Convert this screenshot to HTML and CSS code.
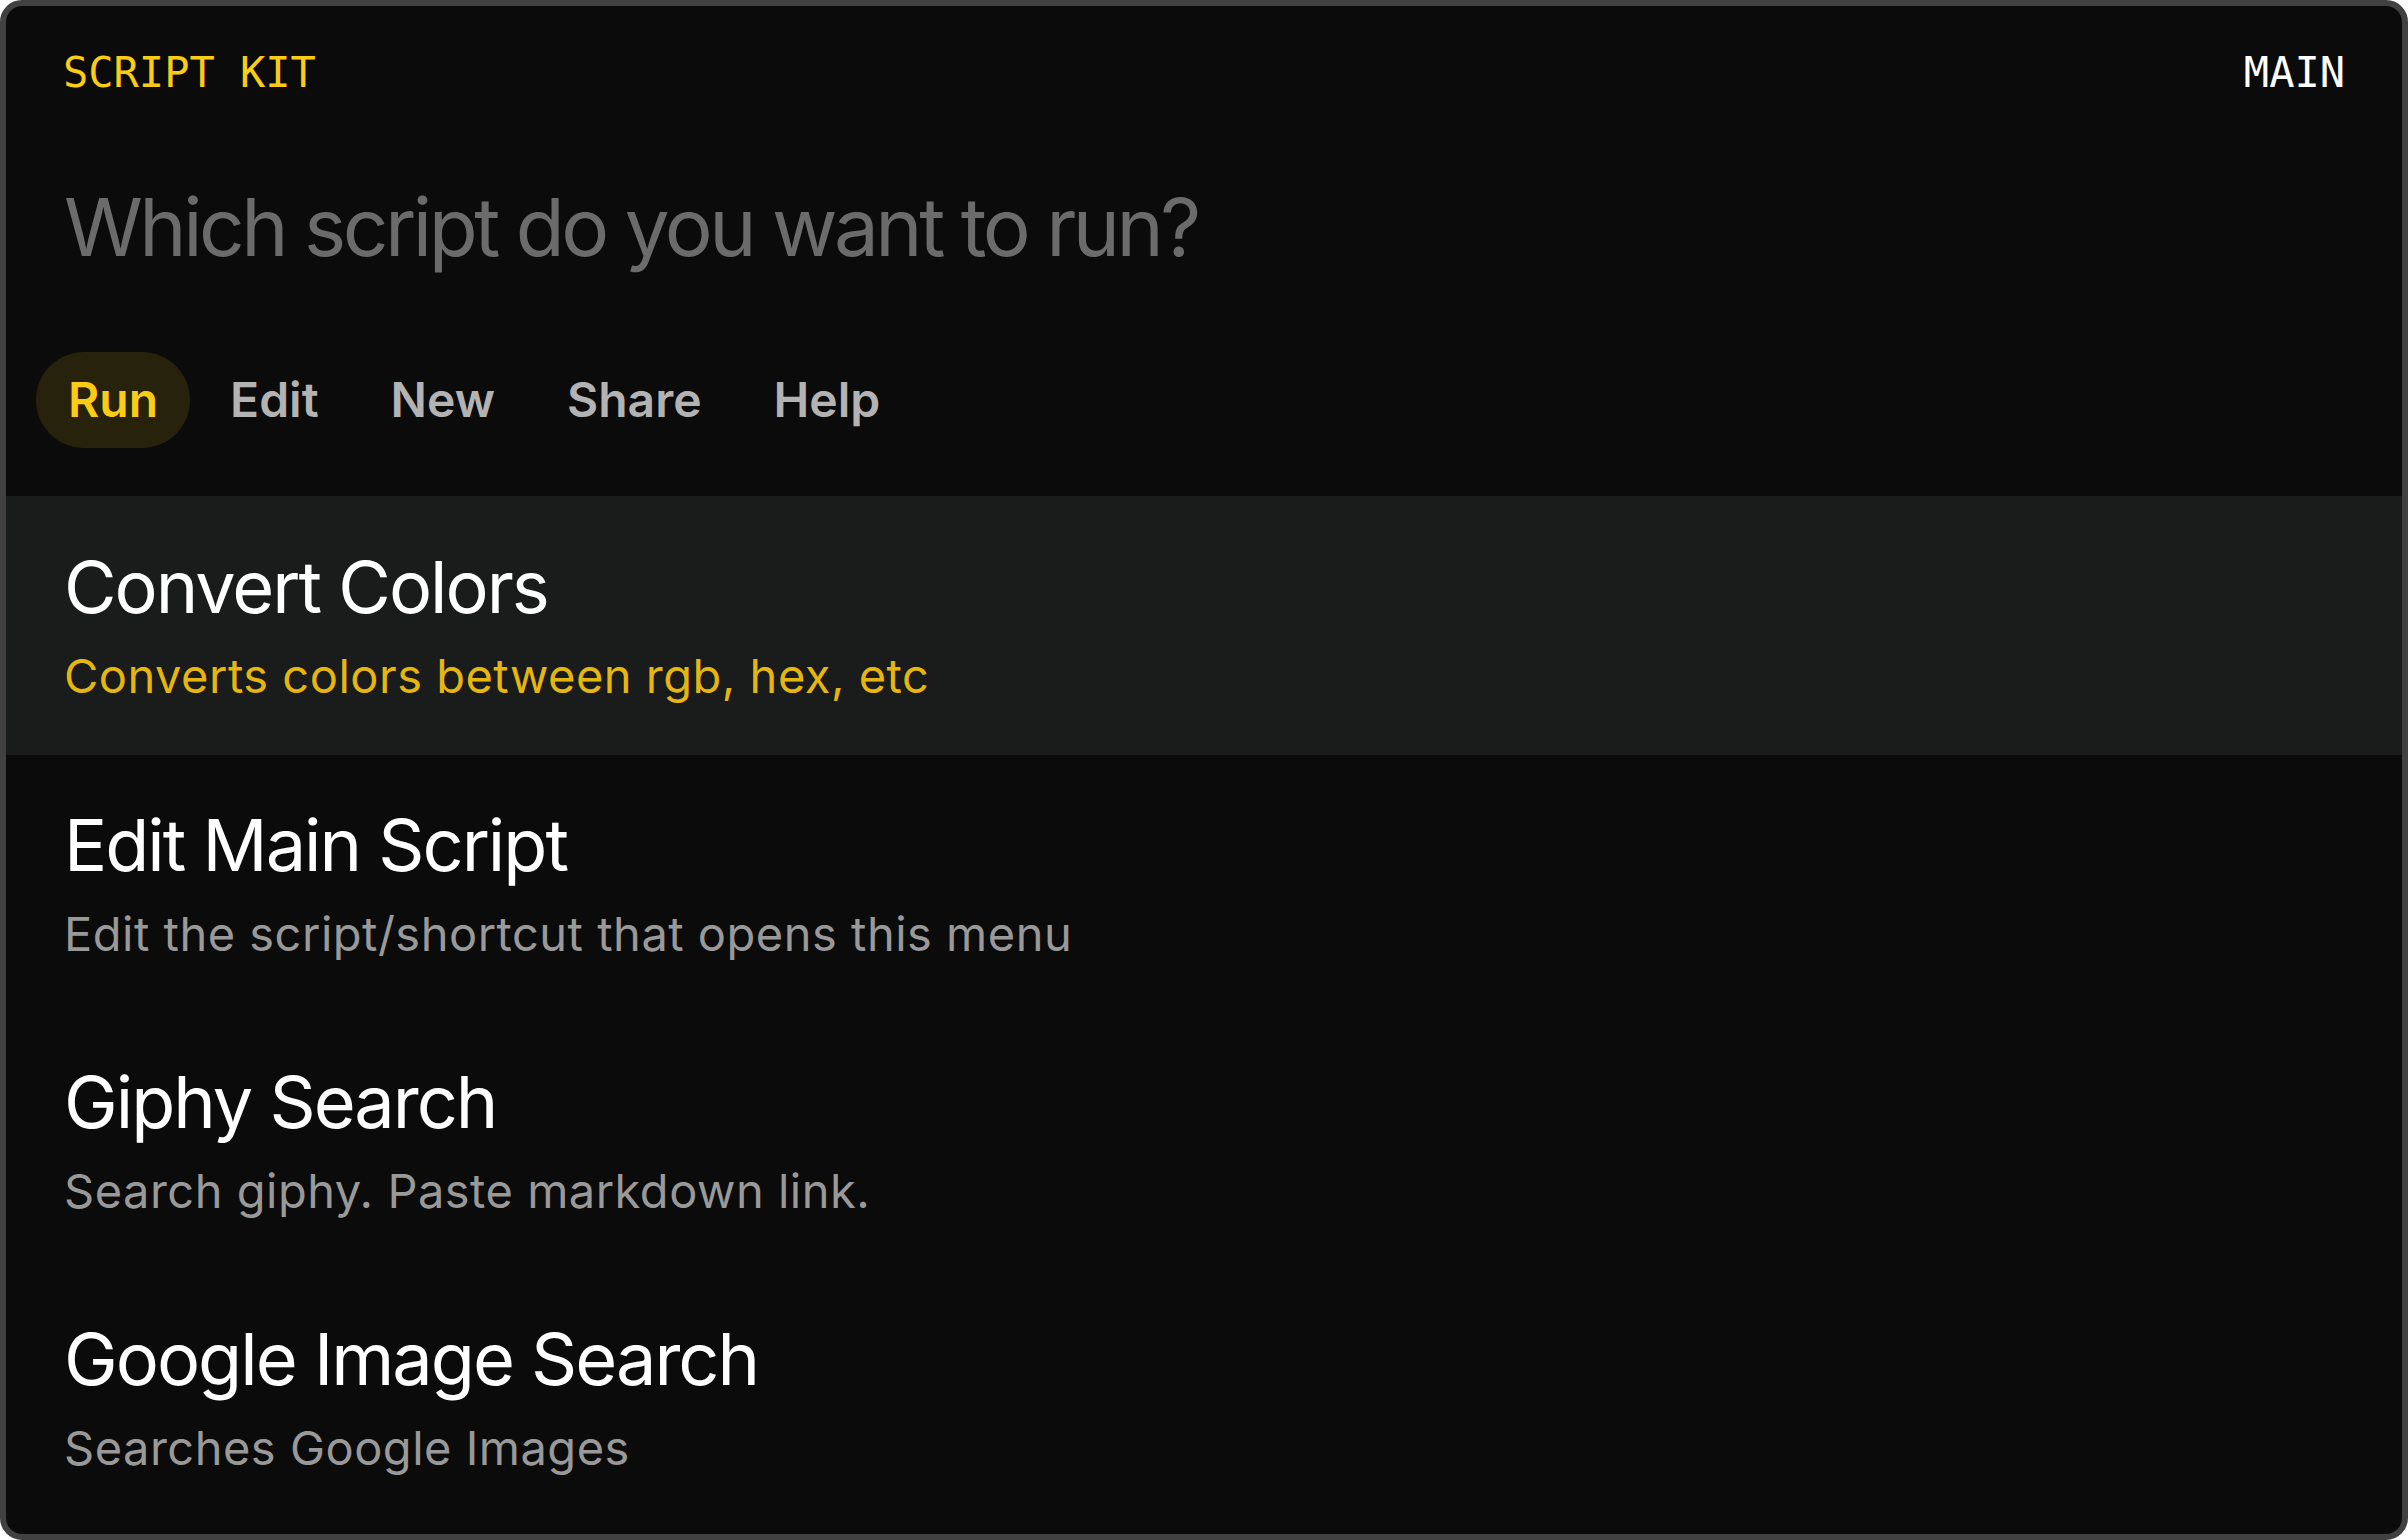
FILE: index.html
```html
<!DOCTYPE html>
<html lang="en">
<head>
<meta charset="utf-8">
<title>Script Kit</title>
<link rel="stylesheet" href="styles.css">
</head>
<body>
<div class="window">
  <header class="topbar">
    <span class="brand">SCRIPT KIT</span>
    <span class="context">MAIN</span>
  </header>
  <div class="prompt">Which script do you want to run?</div>
  <nav class="tabs">
    <span class="tab tab-active">Run</span>
    <span class="tab">Edit</span>
    <span class="tab">New</span>
    <span class="tab">Share</span>
    <span class="tab">Help</span>
  </nav>
  <ul class="choices">
    <li class="choice choice-selected">
      <div class="choice-title">Convert Colors</div>
      <div class="choice-desc">Converts colors between rgb, hex, etc</div>
    </li>
    <li class="choice">
      <div class="choice-title">Edit Main Script</div>
      <div class="choice-desc">Edit the script/shortcut that opens this menu</div>
    </li>
    <li class="choice">
      <div class="choice-title">Giphy Search</div>
      <div class="choice-desc">Search giphy. Paste markdown link.</div>
    </li>
    <li class="choice">
      <div class="choice-title">Google Image Search</div>
      <div class="choice-desc">Searches Google Images</div>
    </li>
  </ul>
</div>
</body>
</html>
```
FILE: styles.css
```css
html, body {
  margin: 0;
  padding: 0;
  background: #ffffff;
}

.window {
  box-sizing: border-box;
  width: 2408px;
  height: 1540px;
  border: 6px solid #414141;
  border-radius: 22px;
  background: #0b0b0b;
  overflow: hidden;
  display: flex;
  flex-direction: column;
  font-family: Inter, "Noto Sans", sans-serif;
}

.topbar {
  display: flex;
  justify-content: space-between;
  align-items: flex-start;
  padding: 46px 57px 0 57px;
  font-family: "DejaVu Sans Mono", "Liberation Mono", monospace;
  font-size: 42px;
  line-height: 42px;
}

.brand {
  color: #facc15;
}

.context {
  color: #ffffff;
}

.prompt {
  margin-top: 93px;
  padding: 0 58px;
  font-size: 80px;
  line-height: 80px;
  color: #6b6b6b;
  letter-spacing: -3.5px;
}

.tabs {
  display: flex;
  gap: 8px;
  margin-top: 85px;
  padding: 0 30px;
}

.tab {
  display: flex;
  align-items: center;
  height: 96px;
  padding: 0 32px;
  border-radius: 48px;
  font-size: 48px;
  line-height: 48px;
  font-weight: 600;
  color: #b3b3b3;
}

.tab-active {
  background: rgba(250, 204, 21, 0.12);
  color: #facc15;
}

.choices {
  list-style: none;
  margin: 48px 0 0 0;
  padding: 0;
}

.choice {
  box-sizing: border-box;
  height: 257px;
  padding: 0 58px 2px 58px;
  display: flex;
  flex-direction: column;
  justify-content: center;
  gap: 29px;
}

.choice-selected {
  height: 259px;
  background: #1a1b1b;
}

.choice-title {
  font-size: 72px;
  line-height: 72px;
  color: #ffffff;
  letter-spacing: -2px;
}

.choice-desc {
  font-size: 47px;
  line-height: 47px;
  color: #999999;
  letter-spacing: 0.5px;
}

.choice-selected .choice-desc {
  color: #e6b610;
}
```
